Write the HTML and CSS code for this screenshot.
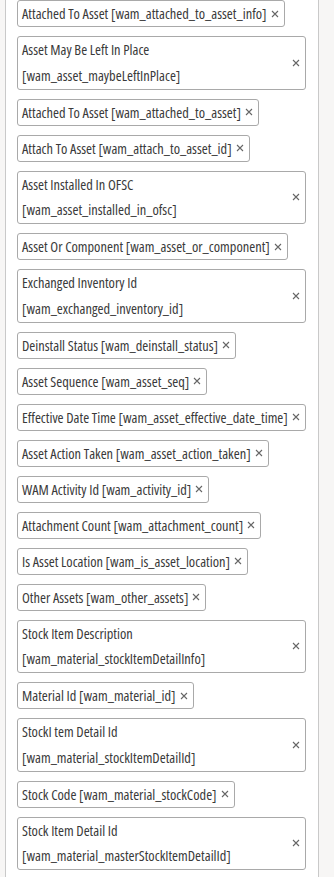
FILE: index.html
```html
<!DOCTYPE html>
<html lang="en">
<head>
  <meta charset="UTF-8">
  <meta name="viewport" content="width=device-width, initial-scale=1">
  <title>Selected Fields</title>
  <link rel="stylesheet" href="styles.css">
</head>
<body>
  <div class="field-panel">
    <div class="chip-list">
      <div class="chip"><span class="chip-text">Attached To Asset [wam_attached_to_asset_info]</span><button class="chip-remove" title="Remove"><svg viewBox="0 0 8 8" width="8" height="8"><path d="M1 1L7 7M7 1L1 7"/></svg></button></div>
      <div class="chip chip-wide"><span class="chip-text"><span class="chip-label">Asset May Be Left In Place</span><span class="chip-key">[wam_asset_maybeLeftInPlace]</span></span><button class="chip-remove" title="Remove"><svg viewBox="0 0 8 8" width="8" height="8"><path d="M1 1L7 7M7 1L1 7"/></svg></button></div>
      <div class="chip"><span class="chip-text">Attached To Asset [wam_attached_to_asset]</span><button class="chip-remove" title="Remove"><svg viewBox="0 0 8 8" width="8" height="8"><path d="M1 1L7 7M7 1L1 7"/></svg></button></div>
      <div class="chip"><span class="chip-text">Attach To Asset [wam_attach_to_asset_id]</span><button class="chip-remove" title="Remove"><svg viewBox="0 0 8 8" width="8" height="8"><path d="M1 1L7 7M7 1L1 7"/></svg></button></div>
      <div class="chip chip-wide"><span class="chip-text"><span class="chip-label">Asset Installed In OFSC</span><span class="chip-key">[wam_asset_installed_in_ofsc]</span></span><button class="chip-remove" title="Remove"><svg viewBox="0 0 8 8" width="8" height="8"><path d="M1 1L7 7M7 1L1 7"/></svg></button></div>
      <div class="chip"><span class="chip-text">Asset Or Component [wam_asset_or_component]</span><button class="chip-remove" title="Remove"><svg viewBox="0 0 8 8" width="8" height="8"><path d="M1 1L7 7M7 1L1 7"/></svg></button></div>
      <div class="chip chip-wide"><span class="chip-text"><span class="chip-label">Exchanged Inventory Id</span><span class="chip-key">[wam_exchanged_inventory_id]</span></span><button class="chip-remove" title="Remove"><svg viewBox="0 0 8 8" width="8" height="8"><path d="M1 1L7 7M7 1L1 7"/></svg></button></div>
      <div class="chip"><span class="chip-text">Deinstall Status [wam_deinstall_status]</span><button class="chip-remove" title="Remove"><svg viewBox="0 0 8 8" width="8" height="8"><path d="M1 1L7 7M7 1L1 7"/></svg></button></div>
      <div class="chip"><span class="chip-text">Asset Sequence [wam_asset_seq]</span><button class="chip-remove" title="Remove"><svg viewBox="0 0 8 8" width="8" height="8"><path d="M1 1L7 7M7 1L1 7"/></svg></button></div>
      <div class="chip"><span class="chip-text">Effective Date Time [wam_asset_effective_date_time]</span><button class="chip-remove" title="Remove"><svg viewBox="0 0 8 8" width="8" height="8"><path d="M1 1L7 7M7 1L1 7"/></svg></button></div>
      <div class="chip"><span class="chip-text">Asset Action Taken [wam_asset_action_taken]</span><button class="chip-remove" title="Remove"><svg viewBox="0 0 8 8" width="8" height="8"><path d="M1 1L7 7M7 1L1 7"/></svg></button></div>
      <div class="chip"><span class="chip-text">WAM Activity Id [wam_activity_id]</span><button class="chip-remove" title="Remove"><svg viewBox="0 0 8 8" width="8" height="8"><path d="M1 1L7 7M7 1L1 7"/></svg></button></div>
      <div class="chip"><span class="chip-text">Attachment Count [wam_attachment_count]</span><button class="chip-remove" title="Remove"><svg viewBox="0 0 8 8" width="8" height="8"><path d="M1 1L7 7M7 1L1 7"/></svg></button></div>
      <div class="chip"><span class="chip-text">Is Asset Location [wam_is_asset_location]</span><button class="chip-remove" title="Remove"><svg viewBox="0 0 8 8" width="8" height="8"><path d="M1 1L7 7M7 1L1 7"/></svg></button></div>
      <div class="chip"><span class="chip-text">Other Assets [wam_other_assets]</span><button class="chip-remove" title="Remove"><svg viewBox="0 0 8 8" width="8" height="8"><path d="M1 1L7 7M7 1L1 7"/></svg></button></div>
      <div class="chip chip-wide"><span class="chip-text"><span class="chip-label">Stock Item Description</span><span class="chip-key">[wam_material_stockItemDetailInfo]</span></span><button class="chip-remove" title="Remove"><svg viewBox="0 0 8 8" width="8" height="8"><path d="M1 1L7 7M7 1L1 7"/></svg></button></div>
      <div class="chip"><span class="chip-text">Material Id [wam_material_id]</span><button class="chip-remove" title="Remove"><svg viewBox="0 0 8 8" width="8" height="8"><path d="M1 1L7 7M7 1L1 7"/></svg></button></div>
      <div class="chip chip-wide"><span class="chip-text"><span class="chip-label">StockI tem Detail Id</span><span class="chip-key">[wam_material_stockItemDetailId]</span></span><button class="chip-remove" title="Remove"><svg viewBox="0 0 8 8" width="8" height="8"><path d="M1 1L7 7M7 1L1 7"/></svg></button></div>
      <div class="chip"><span class="chip-text">Stock Code [wam_material_stockCode]</span><button class="chip-remove" title="Remove"><svg viewBox="0 0 8 8" width="8" height="8"><path d="M1 1L7 7M7 1L1 7"/></svg></button></div>
      <div class="chip chip-wide"><span class="chip-text"><span class="chip-label">Stock Item Detail Id</span><span class="chip-key">[wam_material_masterStockItemDetailId]</span></span><button class="chip-remove" title="Remove"><svg viewBox="0 0 8 8" width="8" height="8"><path d="M1 1L7 7M7 1L1 7"/></svg></button></div>
    </div>
  </div>
</body>
</html>
```

FILE: styles.css
```css
body { margin: 0; background: #f7f6f5; font-family: 'Open Sans', Arial, sans-serif; font-stretch: 75%; color: #3a3a3a;}
.field-panel { margin-left: 5px; width: 312px; min-height: 877px; background: #fff; border-left: 1px solid #c9c9c9; border-right: 1px solid #c9c9c9;}
.chip-list { display: flex; flex-direction: column; align-items: flex-start; gap: 9px; padding: 0 12px 0 11px;}
.chip { display: flex; align-items: center; border: 1px solid #a9a9a9; border-radius: 3px; background: #fff; padding: 0 5px 0 4px; font-size: 14.4px; line-height: 25px; max-width: 100%; box-sizing: border-box;}
.chip-text { white-space: nowrap;}
.chip-remove { display: flex; background: none; border: none; padding: 0; margin: 0 0 0 4px; cursor: pointer;}
.chip-remove svg { display: block; stroke: #666; stroke-width: 1.1; fill: none;}
.chip-wide { align-self: stretch; justify-content: space-between;}
.chip-wide .chip-label, .chip-wide .chip-key { display: block; line-height: 25.75px;}
```
